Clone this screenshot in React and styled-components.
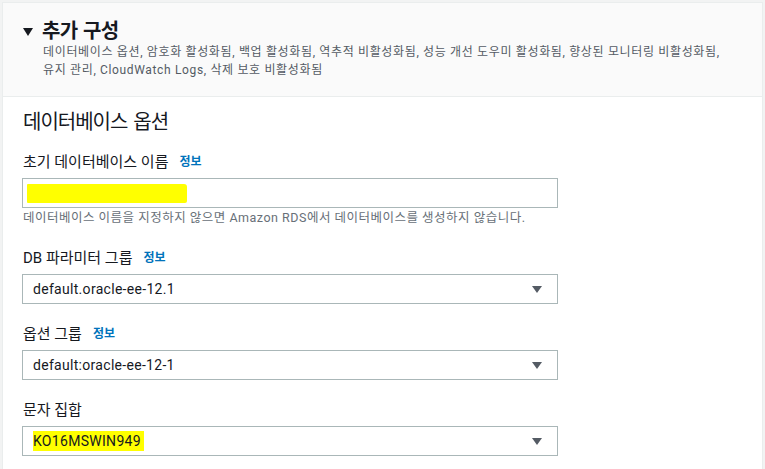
import React from "react";
import styled, { createGlobalStyle } from "styled-components";

const GlobalStyle = createGlobalStyle`
  body {
    margin: 0;
    background: #f2f3f3;
    font-family: "Roboto", "Noto Sans CJK KR", sans-serif;
    color: #16191f;
  }
`;

const fields = [
  { label: "DB 파라미터 그룹", info: true, value: "default.oracle-ee-12.1" },
  { label: "옵션 그룹", info: true, value: "default:oracle-ee-12-1" },
  { label: "문자 집합", info: false, value: "KO16MSWIN949", marked: true },
];

export default function App() {
  return (
    <>
      <GlobalStyle />
      <Panel>
        <Header>
          <Title>
            <Caret />
            <h2>추가 구성</h2>
          </Title>
          <Summary>
            데이터베이스 옵션, 암호화 활성화됨, 백업 활성화됨, 역추적 비활성화됨, 성능 개선 도우미 활성화됨, 향상된 모니터링 비활성화됨,
            <br />
            유지 관리, CloudWatch Logs, 삭제 보호 비활성화됨
          </Summary>
        </Header>
        <Body>
          <SectionTitle>데이터베이스 옵션</SectionTitle>
          <Field>
            <Label>
              초기 데이터베이스 이름<Info>정보</Info>
            </Label>
            <Input>
              <Scribble />
            </Input>
            <Hint>
              데이터베이스 이름을 지정하지 않으면 Amazon RDS에서 데이터베이스를 생성하지 않습니다.
            </Hint>
          </Field>
          {fields.map(({ label, info, value, marked }) => (
            <Field key={label}>
              <Label>
                {label}
                {info && <Info>정보</Info>}
              </Label>
              <Select>
                <Value $marked={marked}>{value}</Value>
                <Arrow />
              </Select>
            </Field>
          ))}
        </Body>
      </Panel>
    </>
  );
}

const Panel = styled.div`
  margin: 2px 0 0 2px;
  width: 759px;
  border: 1px solid #eaeded;
  border-bottom: none;
  box-shadow: 1px 0 0 #f2f3f3;
  background: #ffffff;
`;
const Header = styled.div`
  background: #fafafa;
  border-bottom: 1px solid #eaeded;
  padding: 16px 20px 17px 20px;
`;
const Title = styled.div`
  display: flex;
  align-items: center;
  height: 24px;
  h2 {
    margin: 0;
    font-size: 20px;
    font-weight: 700;
    line-height: 24px;
    letter-spacing: -0.6px;
    word-spacing: 1px;
  }
`;
const Caret = styled.span`
  width: 0;
  height: 0;
  border-left: 5px solid transparent;
  border-right: 5px solid transparent;
  border-top: 8px solid #16191f;
  margin-right: 9px;
  margin-top: 2px;
`;
const Summary = styled.div`
  padding-left: 20px;
  font-size: 12px;
  line-height: 18px;
  color: #545b64;
  letter-spacing: 0.65px;
`;
const Body = styled.div`
  padding: 11px 19px 20px 19px;
`;
const SectionTitle = styled.h3`
  margin: 0 0 15px 1px;
  font-size: 20px;
  font-weight: 400;
  line-height: 28px;
  letter-spacing: -1px;
  word-spacing: 2px;
`;
const Field = styled.div`
  display: flex;
  flex-direction: column;
  margin-bottom: 19px;
`;
const Label = styled.label`
  display: flex;
  align-items: center;
  margin: 0 0 5px 1px;
  font-size: 15px;
  line-height: 22px;
`;
const Info = styled.a`
  margin-left: 11px;
  font-size: 12px;
  font-weight: 700;
  color: #0073bb;
`;
const Input = styled.div`
  box-sizing: border-box;
  width: 536px;
  height: 30px;
  border: 1px solid #aab7b8;
  background: #ffffff;
  padding: 5px 4px;
`;
const Scribble = styled.div`
  width: 160px;
  height: 19px;
  background: #ffff00;
  border-radius: 1px 3px 2px 1px;
`;
const Hint = styled.div`
  margin: 2px 0 2px 1px;
  font-size: 12.5px;
  line-height: 16px;
  color: #687078;
  letter-spacing: 0.5px;
`;
const Select = styled.div`
  box-sizing: border-box;
  width: 536px;
  height: 30px;
  border: 1px solid #aab7b8;
  display: flex;
  align-items: center;
  justify-content: space-between;
  padding: 0 15px 0 10px;
`;
const Value = styled.span`
  font-size: 14px;
  color: #16191f;
  letter-spacing: 0.3px;
  background: ${(p) => (p.$marked ? "#ffff00" : "transparent")};
  padding: ${(p) => (p.$marked ? "1px 3px 1px 0" : "0")};
  line-height: 18px;
`;
const Arrow = styled.span`
  width: 0;
  height: 0;
  border-left: 5.5px solid transparent;
  border-right: 5.5px solid transparent;
  border-top: 7px solid #545b64;
`;
